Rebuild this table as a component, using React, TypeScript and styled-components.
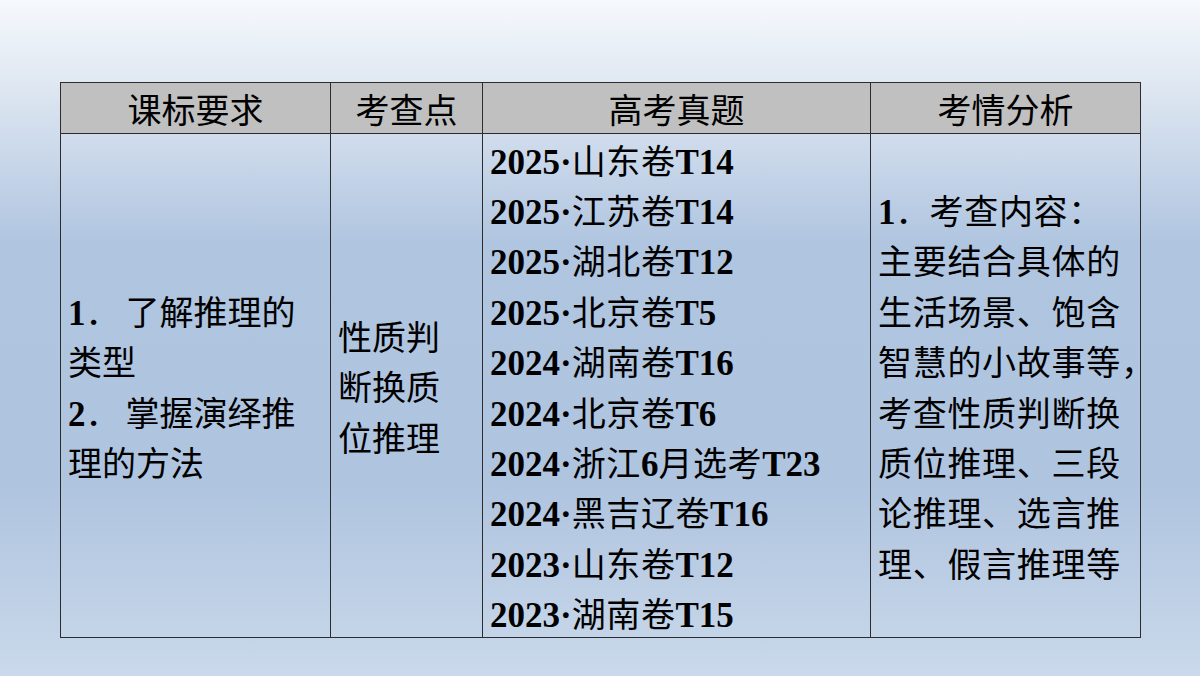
import React from "react";
import styled, { createGlobalStyle } from "styled-components";

const Global = createGlobalStyle`
  html, body { margin: 0; padding: 0; }
  body {
    width: 1200px;
    height: 676px;
    overflow: hidden;
    font-family: "Liberation Serif", "Noto Sans CJK SC", serif;
    color: #000;
  }
`;

const Page = styled.div`
  width: 1200px;
  height: 676px;
  box-sizing: border-box;
  padding: 82px 0 0 60px;
  background: linear-gradient(
    to bottom,
    #f6f9fd 0%,
    #e0e8f2 12%,
    #b0c5e0 36%,
    #afc4df 72%,
    #cad9eb 100%
  );
`;

const Table = styled.div`
  display: grid;
  grid-template-columns: 270px 152px 388px 270px;
  grid-template-rows: 51px 504px;
  width: 1080px;
  border-top: 1.5px solid #2c2c2c;
  border-left: 1.5px solid #2c2c2c;
`;

const HeadCell = styled.div`
  box-sizing: border-box;
  background: #c0c0c0;
  border-right: 1.5px solid #2c2c2c;
  border-bottom: 1.5px solid #2c2c2c;
  display: flex;
  align-items: center;
  justify-content: center;
  font-family: "Noto Sans CJK SC", sans-serif;
  font-size: 34px;
  line-height: 1;
  padding-top: 2px;
`;

const Cell = styled.div<{ $pad?: number; $track?: number }>`
  box-sizing: border-box;
  border-right: 1.5px solid #2c2c2c;
  border-bottom: 1.5px solid #2c2c2c;
  display: flex;
  flex-direction: column;
  justify-content: center;
  padding: 2px 0 0 ${(p) => p.$pad ?? 7}px;
  font-family: "Liberation Serif", "Noto Sans CJK SC", serif;
  font-size: 34px;
  line-height: 50.4px;
  --track: ${(p) => p.$track ?? 0}px;
`;

const Line = styled.div`
  white-space: nowrap;
  height: 50.4px;
`;

const Num = styled.span`
  font-family: "Liberation Serif", serif;
  font-weight: bold;
  font-size: 35px;
`;

const Han = styled.span`
  font-family: "Noto Sans CJK SC", sans-serif;
  font-weight: 400;
  letter-spacing: var(--track);
`;

const Lead = styled.span<{ $gap?: number }>`
  font-family: "Noto Sans CJK SC", sans-serif;
  margin-right: ${(p) => p.$gap ?? 0}px;
`;

const papers: [string, string, string][] = [
  ["2025", "山东卷", "T14"],
  ["2025", "江苏卷", "T14"],
  ["2025", "湖北卷", "T12"],
  ["2025", "北京卷", "T5"],
  ["2024", "湖南卷", "T16"],
  ["2024", "北京卷", "T6"],
  ["2024", "浙江6月选考", "T23"],
  ["2024", "黑吉辽卷", "T16"],
  ["2023", "山东卷", "T12"],
  ["2023", "湖南卷", "T15"],
];

function PaperName({ text }: { text: string }) {
  const parts = text.split(/(\d+)/).filter(Boolean);
  return (
    <>
      {parts.map((p, i) =>
        /^\d+$/.test(p) ? <Num key={i}>{p}</Num> : <Han key={i}>{p}</Han>
      )}
    </>
  );
}

const analysis = [
  "主要结合具体的",
  "生活场景、饱含",
  "智慧的小故事等，",
  "考查性质判断换",
  "质位推理、三段",
  "论推理、选言推",
  "理、假言推理等",
];

export default function App() {
  return (
    <>
      <Global />
      <Page>
        <Table>
          <HeadCell>课标要求</HeadCell>
          <HeadCell>考查点</HeadCell>
          <HeadCell>高考真题</HeadCell>
          <HeadCell>考情分析</HeadCell>

          <Cell>
            <Line>
              <Num>1</Num>
              <Lead $gap={6}>．</Lead>
              <Han>了解推理的</Han>
            </Line>
            <Line>
              <Han>类型</Han>
            </Line>
            <Line>
              <Num>2</Num>
              <Lead $gap={6}>．</Lead>
              <Han>掌握演绎推</Han>
            </Line>
            <Line>
              <Han>理的方法</Han>
            </Line>
          </Cell>

          <Cell $pad={7}>
            <Line>
              <Han>性质判</Han>
            </Line>
            <Line>
              <Han>断换质</Han>
            </Line>
            <Line>
              <Han>位推理</Han>
            </Line>
          </Cell>

          <Cell $pad={7} $track={0.6}>
            {papers.map(([year, name, q]) => (
              <Line key={year + name + q}>
                <Num>{year}·</Num>
                <PaperName text={name} />
                <Num>{q}</Num>
              </Line>
            ))}
          </Cell>

          <Cell $pad={7} $track={0.7}>
            <Line>
              <Num>1</Num>
              <Lead $gap={0}>．</Lead>
              <Han>考查内容：</Han>
            </Line>
            {analysis.map((l) => (
              <Line key={l}>
                <Han>{l}</Han>
              </Line>
            ))}
          </Cell>
        </Table>
      </Page>
    </>
  );
}
